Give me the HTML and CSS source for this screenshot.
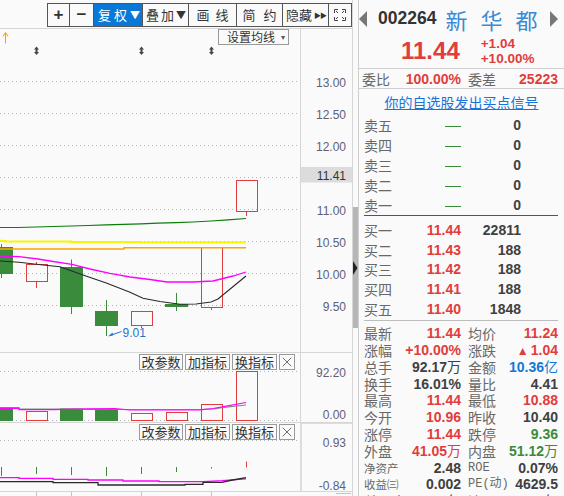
FILE: index.html
```html
<!DOCTYPE html>
<html lang="zh-CN">
<head>
<meta charset="utf-8">
<title>002264 新华都</title>
<link rel="stylesheet" href="styles.css">
</head>
<body>
<div class="app">
  <section class="chart">
    <header class="toolbar">
      <div class="tools">
        <span class="tool t-plus">+</span>
        <span class="tool t-minus">−</span>
        <span class="tool t-fq active">复权<i class="dd">▼</i></span>
        <span class="tool t-dj">叠加<i class="dd">▼</i></span>
        <span class="tool t-hx">画线</span>
        <span class="tool t-jy">简约</span>
        <span class="tool t-yc">隐藏<i class="ff">▶▶</i></span>
        <span class="tool t-fs">
          <svg width="14" height="14" viewBox="0 0 14 14"><path d="M1.5 5V1.5H5M9 1.5h3.5V5M12.5 9v3.5H9M5 12.5H1.5V9M3 3l2 2M11 3l-2 2M11 11l-2-2M3 11l2-2" stroke="#444" fill="none"/></svg>
        </span>
      </div>
    </header>

    <div class="panel panel-main">
      <div class="plot">
        <svg width="300" height="323" viewBox="0 29 300 323">
          <g stroke="#b4b4b4" stroke-dasharray="1 3">
            <line x1="0" y1="81.5" x2="300" y2="81.5"/>
            <line x1="0" y1="113.5" x2="300" y2="113.5"/>
            <line x1="0" y1="145.5" x2="300" y2="145.5"/>
            <line x1="0" y1="177.5" x2="300" y2="177.5"/>
            <line x1="0" y1="209.5" x2="300" y2="209.5"/>
            <line x1="0" y1="241.5" x2="300" y2="241.5"/>
            <line x1="0" y1="273.5" x2="300" y2="273.5"/>
            <line x1="0" y1="305.5" x2="300" y2="305.5"/>
          </g>
          <path d="M5.5 43.5V33M3 36.5L5.5 32.5L8 36.5" stroke="#f4a300" fill="none"/>
          <g fill="#454545">
            <path d="M36.5 46.5l2.5 3h-1.5v2.5h1.5l-2.5 3l-2.5-3h1.5v-2.5h-1.5z"/>
            <path d="M141.5 46.5l2.5 3h-1.5v2.5h1.5l-2.5 3l-2.5-3h1.5v-2.5h-1.5z"/>
            <path d="M211.5 46.5l2.5 3h-1.5v2.5h1.5l-2.5 3l-2.5-3h1.5v-2.5h-1.5z"/>
          </g>
          <g stroke="#3a8c3c" fill="#3a8c3c">
            <line x1="1.5" y1="244" x2="1.5" y2="278"/>
            <rect x="-10" y="247" width="23" height="27" stroke="none"/>
            <line x1="71.5" y1="259.5" x2="71.5" y2="314"/>
            <rect x="60" y="267" width="23" height="40" stroke="none"/>
            <line x1="106.5" y1="300" x2="106.5" y2="336"/>
            <rect x="95" y="311" width="23" height="15" stroke="none"/>
            <line x1="176.5" y1="293" x2="176.5" y2="311"/>
            <rect x="165" y="304" width="23" height="3" stroke="none"/>
          </g>
          <g stroke="#e23d3d" fill="none">
            <line x1="36.5" y1="262" x2="36.5" y2="264.5"/>
            <line x1="36.5" y1="281.5" x2="36.5" y2="288"/>
            <rect x="26.5" y="264.5" width="21" height="17"/>
            <line x1="141.5" y1="325.5" x2="141.5" y2="328"/>
            <rect x="131.5" y="311.5" width="21" height="14"/>
            <line x1="211.5" y1="307.5" x2="211.5" y2="310"/>
            <rect x="201.5" y="247.5" width="21" height="60"/>
            <line x1="246.5" y1="211.5" x2="246.5" y2="216"/>
            <rect x="236.5" y="180.5" width="21" height="31"/>
          </g>
          <polyline fill="none" stroke="#0a7d0a" stroke-width="1.2" points="0,227.5 18,227.5 36,227 53,226.5 71,226 88,225.5 106,224.8 123,224.3 141,223.8 158,223.2 176,222.6 193,222 211,221 228,219.8 246,218.5"/>
          <polyline fill="none" stroke="#f6f600" stroke-width="2.2" points="0,240.8 5,241 5,241.5 71,241.5 71,242 141,242 141,242.5 246,242.5"/>
          <polyline fill="none" stroke="#ffa200" stroke-width="1.4" points="0,249 124,249 124,247.8 246,247.8"/>
          <polyline fill="none" stroke="#ff00ff" stroke-width="1.3" points="0,256 19,256.7 38,259 50,261 72,264.3 90,269 110,273.3 130,277 150,279.5 167,282 193,282 213,281 233,276 246,272"/>
          <polyline fill="none" stroke="#2a2a2a" stroke-width="1.1" points="0,261 19,262.3 43,265 60,266.7 83,275 107,283.3 130,292.3 143,298.3 160,301.5 180,304.3 196,304 211,302 218,299 246,276"/>
          <path d="M121.5 331.5L110 335.5" stroke="#1f73cf" fill="none"/>
          <path d="M108 336.5l4.5-4l0.8 2.8z" fill="#1f73cf"/>
          <text class="lowtxt" x="122.5" y="336.7">9.01</text>
        </svg>
        <div class="ma-set">设置均线<i class="caret">▾</i></div>
      </div>
      <div class="axis">
        <svg width="51" height="323" viewBox="301 29 51 323">
          <g class="ax">
            <text x="346" y="86.5">13.00</text>
            <text x="346" y="118.5">12.50</text>
            <text x="346" y="150.5">12.00</text>
            <text x="346" y="214.5">11.00</text>
            <text x="346" y="246.5">10.50</text>
            <text x="346" y="278.5">10.00</text>
            <text x="346" y="310.5">9.50</text>
          </g>
          <rect x="301" y="167" width="51" height="15.5" fill="#dcdcdc"/>
          <text class="ax ax-hl" x="346" y="180">11.41</text>
        </svg>
      </div>
    </div>

    <div class="panel panel-vol">
      <div class="plot">
        <svg width="300" height="69" viewBox="0 353 300 69">
          <g stroke="#b4b4b4" stroke-dasharray="1 3">
            <line x1="0" y1="371.5" x2="300" y2="371.5"/>
            <line x1="0" y1="420.5" x2="300" y2="420.5"/>
          </g>
          <g fill="#3a8c3c">
            <rect x="-10" y="408.5" width="23" height="12.5"/>
            <rect x="60" y="408.5" width="23" height="12.5"/>
            <rect x="95" y="409.5" width="23" height="11.5"/>
          </g>
          <g stroke="#e23d3d" fill="none">
            <rect x="26.5" y="411.5" width="21" height="9"/>
            <rect x="131.5" y="413.5" width="21" height="7"/>
            <rect x="166.5" y="412.5" width="21" height="8"/>
            <rect x="201.5" y="404.5" width="21" height="16"/>
            <rect x="236.5" y="371.5" width="21" height="49"/>
          </g>
          <polyline fill="none" stroke="#8a8a8a" stroke-width="1.2" points="0,407.5 19,407.6 19,409 53,409 88,409.3 123,409.5 160,409.5 200,409.5 213,409 222,407.6 246,405"/>
          <polyline fill="none" stroke="#ff00ff" stroke-width="1.2" points="0,408.3 19,408.4 19,409.6 53,409.6 88,408.8 115,408.6 130,410 165,410 200,409.8 213,408.5 225,406.4 246,402.5"/>
        </svg>
        <div class="panel-tools">
          <span class="ptool w44">改参数</span>
          <span class="ptool w45">加指标</span>
          <span class="ptool w45">换指标</span>
          <span class="ptool close"><svg width="12" height="12" viewBox="0 0 14 14"><path d="M2 2l10 10M12 2L2 12" stroke="#555" fill="none"/></svg></span>
        </div>
      </div>
      <div class="axis">
        <svg width="51" height="69" viewBox="301 353 51 69">
          <g class="ax">
            <text x="346" y="377">92.20</text>
            <text x="346" y="418.5">0.00</text>
          </g>
        </svg>
      </div>
    </div>

    <div class="panel panel-macd">
      <div class="plot">
        <svg width="300" height="68" viewBox="0 423 300 68">
          <g stroke="#b4b4b4" stroke-dasharray="1 3">
            <line x1="0" y1="440.5" x2="300" y2="440.5"/>
          </g>
          <g stroke="#3a8c3c">
            <line x1="1.5" y1="467" x2="1.5" y2="476"/>
            <line x1="36.5" y1="467" x2="36.5" y2="474"/>
            <line x1="71.5" y1="467" x2="71.5" y2="475"/>
            <line x1="106.5" y1="467" x2="106.5" y2="476"/>
            <line x1="141.5" y1="467" x2="141.5" y2="474"/>
            <line x1="176.5" y1="467" x2="176.5" y2="472"/>
            <line x1="211.5" y1="467" x2="211.5" y2="468.5"/>
          </g>
          <line x1="246.5" y1="461.5" x2="246.5" y2="467.5" stroke="#e23d3d"/>
          <polyline fill="none" stroke="#ff00ff" stroke-width="1.3" points="0,477.7 19,477.7 19,478.4 53,478.4 53,479.3 88,479.3 88,480 123,480 123,481 159,481 159,481.7 203,481.7 222,480.7 246,478.8"/>
          <polyline fill="none" stroke="#2a2a2a" stroke-width="1.3" points="0,481.7 53,481.7 53,482.7 98,482.7 98,485 185,485 185,484.3 203,484.3 203,482.3 222,482.3 230,480.5 246,477.7"/>
        </svg>
        <div class="panel-tools">
          <span class="ptool w44">改参数</span>
          <span class="ptool w45">加指标</span>
          <span class="ptool w45">换指标</span>
          <span class="ptool close"><svg width="12" height="12" viewBox="0 0 14 14"><path d="M2 2l10 10M12 2L2 12" stroke="#555" fill="none"/></svg></span>
        </div>
      </div>
      <div class="axis axis-sel">
        <svg width="50" height="68" viewBox="302 423 50 68">
          <g class="ax">
            <text x="346" y="445.5">0.93</text>
            <text x="346" y="489">-0.84</text>
          </g>
        </svg>
      </div>
    </div>

    <div class="xaxis">
      <svg width="352" height="5" viewBox="0 492 352 5">
        <g stroke="#c4c4c4">
          <line x1="36.5" y1="492" x2="36.5" y2="497"/>
          <line x1="71.5" y1="492" x2="71.5" y2="497"/>
          <line x1="141.5" y1="492" x2="141.5" y2="497"/>
          <line x1="211.5" y1="492" x2="211.5" y2="497"/>
          <line x1="336" y1="493.5" x2="351" y2="493.5"/>
        </g>
      </svg>
    </div>
  </section>

  <div class="scroll">
    <div class="thumb"></div>
    <svg class="grip" width="5" height="18" viewBox="0 0 5 18"><path d="M0 2L4.5 9L0 16z" fill="#222"/></svg>
  </div>

  <aside class="quote">
    <div class="q-head">
      <span class="tri-l"></span>
      <span class="code">002264</span>
      <span class="name">新华都</span>
      <span class="tri-r"></span>
    </div>
    <div class="q-price">
      <span class="last">11.44</span>
      <div class="chg">
        <span>+1.04</span>
        <span>+10.00%</span>
      </div>
    </div>
    <div class="q-ratio">
      <span class="lbl">委比</span>
      <span class="val up">100.00%</span>
      <span class="lbl lbl2">委差</span>
      <span class="val up">25223</span>
    </div>
    <div class="q-signal"><a class="signal">你的自选股发出买点信号</a></div>

    <div class="book book-sell">
      <div class="brow"><span class="lbl">卖五</span><span class="bp"><i class="dash"></i></span><span class="bv">0</span></div>
      <div class="brow"><span class="lbl">卖四</span><span class="bp"><i class="dash"></i></span><span class="bv">0</span></div>
      <div class="brow"><span class="lbl">卖三</span><span class="bp"><i class="dash"></i></span><span class="bv">0</span></div>
      <div class="brow"><span class="lbl">卖二</span><span class="bp"><i class="dash"></i></span><span class="bv">0</span></div>
      <div class="brow"><span class="lbl">卖一</span><span class="bp"><i class="dash"></i></span><span class="bv">0</span></div>
    </div>
    <div class="sep-dark"></div>
    <div class="book book-buy">
      <div class="brow"><span class="lbl">买一</span><span class="bp up">11.44</span><span class="bv">22811</span></div>
      <div class="brow"><span class="lbl">买二</span><span class="bp up">11.43</span><span class="bv">188</span></div>
      <div class="brow"><span class="lbl">买三</span><span class="bp up">11.42</span><span class="bv">188</span></div>
      <div class="brow"><span class="lbl">买四</span><span class="bp up">11.41</span><span class="bv">188</span></div>
      <div class="brow"><span class="lbl">买五</span><span class="bp up">11.40</span><span class="bv">1848</span></div>
    </div>
    <div class="sep-light"></div>

    <div class="stats">
      <div class="srow"><span class="lbl">最新</span><span class="val up">11.44</span><span class="lbl lbl2">均价</span><span class="val up">11.24</span></div>
      <div class="srow"><span class="lbl">涨幅</span><span class="val up">+10.00%</span><span class="lbl lbl2">涨跌</span><span class="val up"><i class="tri-up">▲</i>1.04</span></div>
      <div class="srow"><span class="lbl">总手</span><span class="val">92.17<i class="cj">万</i></span><span class="lbl lbl2">金额</span><span class="val blue">10.36<i class="cj">亿</i></span></div>
      <div class="srow"><span class="lbl">换手</span><span class="val">16.01%</span><span class="lbl lbl2">量比</span><span class="val">4.41</span></div>
      <div class="srow"><span class="lbl">最高</span><span class="val up">11.44</span><span class="lbl lbl2">最低</span><span class="val up">10.88</span></div>
      <div class="srow"><span class="lbl">今开</span><span class="val up">10.96</span><span class="lbl lbl2">昨收</span><span class="val">10.40</span></div>
      <div class="srow"><span class="lbl">涨停</span><span class="val up">11.44</span><span class="lbl lbl2">跌停</span><span class="val down">9.36</span></div>
      <div class="srow"><span class="lbl">外盘</span><span class="val up">41.05<i class="cj">万</i></span><span class="lbl lbl2">内盘</span><span class="val down">51.12<i class="cj">万</i></span></div>
      <div class="srow"><span class="lbl small">净资产</span><span class="val">2.48</span><span class="lbl lbl2 mono">ROE</span><span class="val">0.07%</span></div>
      <div class="srow"><span class="lbl small">收益㈢</span><span class="val">0.002</span><span class="lbl lbl2 mono">PE(动)</span><span class="val">4629.5</span></div>
      <div class="srow"><span class="lbl">总股本</span><span class="val">6.92<i class="cj">亿</i></span><span class="lbl lbl2">流通股</span><span class="val">5.77<i class="cj">亿</i></span></div>
    </div>
  </aside>
</div>
</body>
</html>
```

FILE: styles.css
```css
* { box-sizing: border-box; margin: 0; padding: 0; }
html, body {
  width: 564px;
  height: 496px;
  overflow: hidden;
  background: #fafafa;
}
body {
  font-family: "Noto Sans CJK SC", "Liberation Sans", sans-serif;
  color: #333;
}
i { font-style: normal; }
svg { display: block; overflow: hidden; }

.app { display: flex; height: 496px; }

/* ---------- chart side ---------- */
.chart {
  width: 353px;
  flex: none;
  border-right: 1px solid #d6d6d6;
  display: flex;
  flex-direction: column;
}
.toolbar {
  height: 29px;
  flex: none;
  border-bottom: 1px solid #d6d6d6;
  display: flex;
  justify-content: flex-end;
  align-items: flex-start;
  padding-top: 3px;
}
.tools {
  display: flex;
  height: 24px;
  border-top: 1px solid #555;
  border-bottom: 1px solid #555;
  border-left: 1px solid #555;
}
.tool {
  border-right: 1px solid #555;
  display: flex;
  align-items: center;
  justify-content: center;
  font-size: 13px;
  line-height: 22px;
  color: #333;
  white-space: nowrap;
}
.tool.active { background: #0a78d6; color: #fff; }
.t-plus { width: 22px; font: bold 17px "Liberation Sans", sans-serif; }
.t-minus { width: 24px; font: bold 17px "Liberation Sans", sans-serif; }
.t-fq { width: 49px; letter-spacing: 3px; padding-left: 2px; }
.t-dj { width: 46px; letter-spacing: 2px; padding-left: 1px; }
.t-hx { width: 48px; letter-spacing: 6px; padding-left: 6px; }
.t-jy { width: 46px; letter-spacing: 8px; padding-left: 8px; }
.t-yc { width: 46px; letter-spacing: 0; padding-left: 1px; }
.t-fs { width: 23px; }
.dd { font-size: 10px; letter-spacing: 0; }
.ff { font-size: 7px; letter-spacing: -1px; margin-left: 2px; color: #333; }

.panel {
  display: flex;
  flex: none;
  border-bottom: 1px solid #d6d6d6;
}
.panel-main { height: 324px; }
.panel-vol { height: 70px; }
.panel-macd { height: 69px; }
.plot { width: 300px; position: relative; }
.axis { width: 52px; border-left: 1px solid #d6d6d6; }
.axis-sel { border-left: 2px solid #dcdcdc; border-top: 1px solid #dcdcdc; }

.ax text, text.ax {
  font-family: "Liberation Sans", sans-serif;
  font-size: 12px;
  fill: #5f6078;
  text-anchor: end;
}
text.ax-hl { fill: #333; }
.lowtxt {
  font-family: "Liberation Sans", sans-serif;
  font-size: 12px;
  fill: #1f73cf;
}

.ma-set {
  position: absolute;
  top: 0;
  right: 11px;
  width: 71px;
  height: 16px;
  border: 1px solid #9a9a9a;
  font-size: 12px;
  line-height: 14px;
  color: #333;
  padding-left: 8px;
  display: flex;
  background: #fafafa;
}
.caret { font-size: 8px; margin-left: 6px; color: #555; }

.panel-tools {
  position: absolute;
  top: 1px;
  right: 5px;
  display: flex;
  gap: 2px;
}
.ptool {
  height: 16px;
  border: 1px solid #9a9a9a;
  font-size: 13px;
  line-height: 14px;
  color: #333;
  text-align: center;
  background: #fafafa;
  white-space: nowrap;
}
.w44 { width: 44px; }
.w45 { width: 45px; }
.ptool.close { width: 16px; display: flex; align-items: center; justify-content: center; }

.xaxis { flex: 1; }

/* ---------- scrollbar ---------- */
.scroll { width: 5px; flex: none; position: relative; }
.thumb { margin-top: 207px; height: 121px; background: #b6b6b6; }
.grip { position: absolute; left: 0; top: 259px; }

/* ---------- quote side ---------- */
.quote {
  flex: 1;
  border-left: 1px solid #cfcfcf;
  display: flex;
  flex-direction: column;
  overflow: hidden;
}
.q-head {
  height: 36px;
  flex: none;
  display: flex;
  align-items: center;
  padding-top: 1px;
}
.tri-l {
  width: 0; height: 0;
  border-top: 8px solid transparent;
  border-bottom: 8px solid transparent;
  border-right: 8px solid #777;
}
.tri-r {
  width: 0; height: 0;
  border-top: 8px solid transparent;
  border-bottom: 8px solid transparent;
  border-left: 8px solid #777;
}
.code {
  margin-left: 11px;
  font: bold 17.5px "Liberation Sans", sans-serif;
  color: #333;
}
.name {
  margin-left: 9px;
  font-size: 22px;
  line-height: 26px;
  color: #3a8ad6;
  letter-spacing: 13px;
}
.q-price {
  height: 33px;
  flex: none;
  display: flex;
  align-items: center;
  padding-left: 42px;
  padding-bottom: 2px;
  border-bottom: 1px solid #cfcfcf;
}
.last {
  font: bold 24px "Liberation Sans", sans-serif;
  color: #e23c3c;
}
.chg {
  margin-left: 21px;
  display: flex;
  flex-direction: column;
  font: bold 13.5px/15px "Liberation Sans", sans-serif;
  color: #e23c3c;
}
.q-ratio {
  height: 20px;
  flex: none;
  border-bottom: 1px solid #cfcfcf;
  display: grid;
  grid-template-columns: 42px 57px 47px 50px;
  align-items: center;
  padding-left: 3px;
  line-height: 16px;
}
.q-signal {
  height: 22px;
  flex: none;
  text-align: center;
}
.signal {
  font-size: 14px;
  line-height: 18px;
  color: #1a73d8;
  text-decoration: underline;
}

.lbl { font-size: 14px; line-height: 16px; color: #686868; white-space: nowrap; }
.lbl2 { padding-left: 7px; }
.lbl.small { font-size: 11.5px; }
.lbl.mono { font: 12px/16px "Liberation Mono", "Noto Sans CJK SC", monospace; color: #686868; padding-left: 7px; }
.val {
  font: bold 14px/16px "Liberation Sans", sans-serif;
  color: #404040;
  text-align: right;
  white-space: nowrap;
}
.up { color: #e23c3c; }
.down { color: #3a8c3a; }
.blue { color: #1478d2; }
.cj { font-family: "Noto Sans CJK SC", sans-serif; font-weight: normal; font-size: 14px; line-height: 13px; }
.tri-up { font-size: 12px; line-height: 13px; margin-right: 2px; }

.book { flex: none; padding-top: 4px; }
.brow {
  display: grid;
  grid-template-columns: 40px 57px 60px;
  align-items: center;
  height: 20px;
  padding-left: 5px;
}
.book-buy .brow { height: 19.75px; }
.bp, .bv {
  font: bold 14px/16px "Liberation Sans", sans-serif;
  color: #404040;
  text-align: right;
}
.bp.up { color: #e23c3c; }
.dash {
  display: inline-block;
  width: 16px;
  height: 1px;
  background: #3a8c3a;
  vertical-align: middle;
}
.sep-dark { flex: none; height: 1px; margin: 0 6px 0 5px; background: #555; }
.sep-light { flex: none; height: 1px; margin: 1px 6px 0 5px; background: #bdbdbd; }

.stats { flex: none; padding-top: 4px; }
.srow {
  display: grid;
  grid-template-columns: 40px 57px 47px 50px;
  align-items: center;
  height: 16.8px;
  padding-left: 5px;
}
.srow .val { justify-self: end; }
```
